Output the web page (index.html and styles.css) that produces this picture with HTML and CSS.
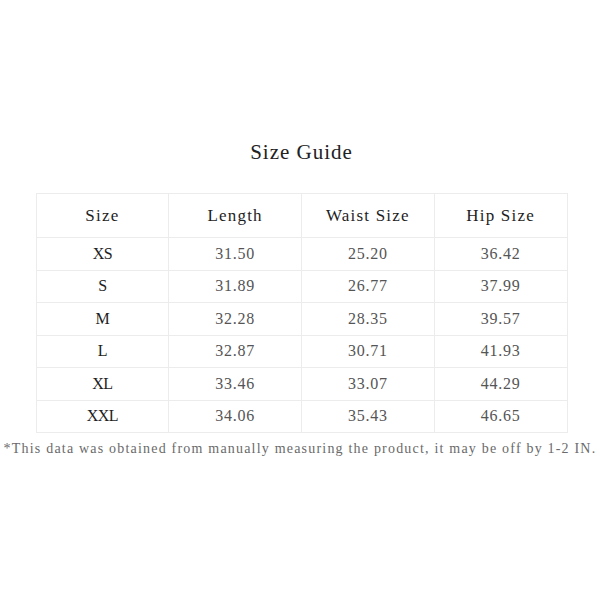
FILE: index.html
```html
<!DOCTYPE html>
<html>
<head>
<meta charset="utf-8">
<link rel="stylesheet" href="styles.css">
</head>
<body>
<div class="page">
  <h1 class="title">Size Guide</h1>
  <table class="guide">
    <thead>
      <tr><th>Size</th><th>Length</th><th>Waist Size</th><th>Hip Size</th></tr>
    </thead>
    <tbody>
      <tr><td class="sz">XS</td><td>31.50</td><td>25.20</td><td>36.42</td></tr>
      <tr><td class="sz">S</td><td>31.89</td><td>26.77</td><td>37.99</td></tr>
      <tr><td class="sz">M</td><td>32.28</td><td>28.35</td><td>39.57</td></tr>
      <tr><td class="sz">L</td><td>32.87</td><td>30.71</td><td>41.93</td></tr>
      <tr><td class="sz">XL</td><td>33.46</td><td>33.07</td><td>44.29</td></tr>
      <tr><td class="sz">XXL</td><td>34.06</td><td>35.43</td><td>46.65</td></tr>
    </tbody>
  </table>
  <p class="note">*This data was obtained from manually measuring the product, it may be off by 1-2 IN.</p>
</div>
</body>
</html>
```
FILE: styles.css
```css
html, body {
  margin: 0;
  padding: 0;
  background: #ffffff;
}
body {
  width: 600px;
  height: 600px;
  overflow: hidden;
  font-family: "Liberation Serif", "DejaVu Serif", serif;
}
.page {
  display: flex;
  flex-direction: column;
  align-items: center;
  padding-top: 138px;
}
.title {
  margin: 0 0 27px 3px;
  font-size: 21px;
  font-weight: normal;
  line-height: 28px;
  letter-spacing: 1px;
  color: #222;
}
.guide {
  width: 532px;
  margin-left: 3px;
  border-collapse: collapse;
  table-layout: fixed;
}
.guide th, .guide td {
  border: 1px solid #ececec;
  text-align: center;
  padding: 0;
}
.guide th {
  height: 43px;
  font-size: 17px;
  font-weight: normal;
  letter-spacing: 1.2px;
  color: #1e1e1e;
}
.guide td {
  height: 31.5px;
  font-size: 16px;
  letter-spacing: 0.8px;
  color: #555;
}
.guide td.sz {
  color: #1e1e1e;
  letter-spacing: -0.5px;
}
.note {
  margin: 8px 0 0 0;
  width: 600px;
  white-space: nowrap;
  text-align: center;
  font-size: 14px;
  letter-spacing: 1.2px;
  color: #6a6a6a;
}
```
